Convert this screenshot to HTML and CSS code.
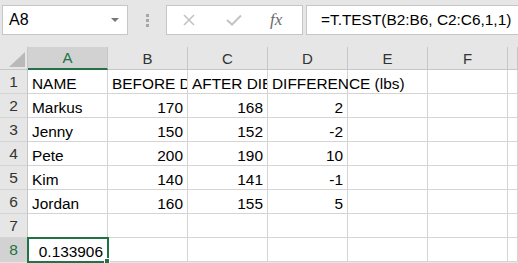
FILE: index.html
```html
<!doctype html>
<html>
  <head>
    <title>T.TEST</title>
    <link rel="stylesheet" href="styles.css">
  </head>
  <body>

    <div class="formula-bar">
        <div class="name-box">
            <span>A8</span>
            <div class="caret"></div>
        </div>
        <div class="grip">
            <i></i><i></i><i></i>
        </div>
        <div class="buttons">
            <svg class="btn-x" width="16" height="12" viewBox="0 0 16 12">
                <path d="M3 1 L13 11 M13 1 L3 11" stroke="#c3c3c3" stroke-width="1.6" fill="none"/>
            </svg>
            <svg class="btn-ok" width="16" height="12" viewBox="0 0 16 12">
                <path d="M1 6 L6 10.5 L15 1.5" stroke="#c3c3c3" stroke-width="2" fill="none"/>
            </svg>
            <span class="fx">fx</span>
        </div>
        <div class="formula">=T.TEST(B2:B6, C2:C6,1,1)</div>
    </div>

    <div class="sheet">
        <div class="corner"><div class="tri"></div></div>
        <div class="col-head sel">A</div>
        <div class="col-head">B</div>
        <div class="col-head">C</div>
        <div class="col-head">D</div>
        <div class="col-head">E</div>
        <div class="col-head">F</div>
        <div class="col-head"></div>

        <div class="row-head">1</div>
        <div class="cell">NAME</div>
        <div class="cell">BEFORE DIET (lbs)</div>
        <div class="cell">AFTER DIET (lbs)</div>
        <div class="cell spill">DIFFERENCE (lbs)</div>
        <div class="cell"></div>
        <div class="cell"></div>
        <div class="cell"></div>

        <div class="row-head">2</div>
        <div class="cell">Markus</div>
        <div class="cell num">170</div>
        <div class="cell num">168</div>
        <div class="cell num">2</div>
        <div class="cell"></div>
        <div class="cell"></div>
        <div class="cell"></div>

        <div class="row-head">3</div>
        <div class="cell">Jenny</div>
        <div class="cell num">150</div>
        <div class="cell num">152</div>
        <div class="cell num">-2</div>
        <div class="cell"></div>
        <div class="cell"></div>
        <div class="cell"></div>

        <div class="row-head">4</div>
        <div class="cell">Pete</div>
        <div class="cell num">200</div>
        <div class="cell num">190</div>
        <div class="cell num">10</div>
        <div class="cell"></div>
        <div class="cell"></div>
        <div class="cell"></div>

        <div class="row-head">5</div>
        <div class="cell">Kim</div>
        <div class="cell num">140</div>
        <div class="cell num">141</div>
        <div class="cell num">-1</div>
        <div class="cell"></div>
        <div class="cell"></div>
        <div class="cell"></div>

        <div class="row-head">6</div>
        <div class="cell">Jordan</div>
        <div class="cell num">160</div>
        <div class="cell num">155</div>
        <div class="cell num">5</div>
        <div class="cell"></div>
        <div class="cell"></div>
        <div class="cell"></div>

        <div class="row-head">7</div>
        <div class="cell"></div>
        <div class="cell"></div>
        <div class="cell"></div>
        <div class="cell"></div>
        <div class="cell"></div>
        <div class="cell"></div>
        <div class="cell"></div>

        <div class="row-head sel">8</div>
        <div class="cell num active">0.133906</div>
        <div class="cell"></div>
        <div class="cell"></div>
        <div class="cell"></div>
        <div class="cell"></div>
        <div class="cell"></div>
        <div class="cell"></div>
    </div>

  </body>
</html>
```
FILE: styles.css
```css
html {
    box-sizing: border-box;
}
*, *:before, *:after {
    box-sizing: inherit;
}

html, body {
    margin: 0;
    padding: 0;
    width: 100%;
    height: 100%;
    overflow: hidden;
}

body {
    background-color: #e6e6e6;
    font-family: "Liberation Sans", Arial, sans-serif;
    color: #000;
}

/* formula bar */
.formula-bar {
    display: flex;
    align-items: center;
    height: 30px;
    margin-top: 5px;
    padding-left: 2px;
}

.name-box {
    width: 126px;
    height: 30px;
    background-color: #fff;
    border: 1px solid #c6c6c6;
    display: flex;
    align-items: center;
    justify-content: space-between;
    padding: 0 8px 0 6px;
    font-size: 16px;
}

.caret {
    width: 0;
    height: 0;
    border-left: 4px solid transparent;
    border-right: 4px solid transparent;
    border-top: 4px solid #777;
}

.grip {
    width: 38px;
    display: flex;
    flex-direction: column;
    align-items: center;
    gap: 2px;
}
.grip i {
    display: block;
    width: 3px;
    height: 3px;
    background-color: #a6a6a6;
}

.buttons {
    width: 137px;
    height: 30px;
    background-color: #fff;
    border: 1px solid #c6c6c6;
    display: flex;
    align-items: center;
    padding-left: 14px;
}
.btn-x {
    margin-right: 29px;
}
.btn-ok {
    margin-right: 28px;
}
.fx {
    font-family: "Liberation Serif", serif;
    font-style: italic;
    font-size: 17px;
    color: #6a6a6a;
}

.formula {
    flex: 1;
    min-width: 0;
    height: 30px;
    margin-left: 3px;
    background-color: #fff;
    border: 1px solid #c6c6c6;
    border-right: none;
    padding-left: 14px;
    line-height: 28px;
    font-size: 15.4px;
    white-space: nowrap;
    overflow: hidden;
}

/* sheet */
.sheet {
    display: grid;
    grid-template-columns: 28px repeat(6, 80px) 1fr;
    grid-template-rows: 23px repeat(8, 24px);
    margin-top: 12px;
}

.corner {
    border-right: 1px solid #c6c6c6;
    border-bottom: 1px solid #c6c6c6;
    position: relative;
}
.tri {
    position: absolute;
    left: 9px;
    top: 5px;
    width: 16px;
    height: 15px;
    background-color: #b9b9b9;
    clip-path: polygon(100% 0, 100% 100%, 0 100%);
}

.col-head {
    border-right: 1px solid #c6c6c6;
    border-bottom: 1px solid #c6c6c6;
    text-align: center;
    font-size: 15px;
    line-height: 23px;
    color: #333;
}
.col-head.sel {
    background-color: #d2d2d2;
    color: #217346;
    border-bottom: 2px solid #217346;
    line-height: 22px;
}

.row-head {
    border-right: 1px solid #c6c6c6;
    border-bottom: 1px solid #d4d4d4;
    text-align: center;
    font-size: 15.5px;
    line-height: 24px;
    color: #333;
}
.row-head.sel {
    background-color: #d2d2d2;
    color: #217346;
}

.cell {
    min-width: 0;
    background-color: #fff;
    border-right: 1px solid #d4d4d4;
    border-bottom: 1px solid #d4d4d4;
    font-size: 15.4px;
    line-height: 20px;
    padding: 4px 4px 0 4px;
    white-space: nowrap;
    overflow: hidden;
}
.cell.num {
    text-align: right;
    padding-right: 4px;
}
.cell.spill {
    overflow: visible;
    position: relative;
    z-index: 1;
}

.cell.active {
    position: relative;
    overflow: visible;
    outline: 2px solid #217346;
    outline-offset: -1px;
    padding-right: 4px;
}
.cell.active:after {
    content: "";
    position: absolute;
    right: -3px;
    bottom: -3px;
    width: 6px;
    height: 6px;
    background-color: #217346;
    border: 1px solid #fff;
}
```
